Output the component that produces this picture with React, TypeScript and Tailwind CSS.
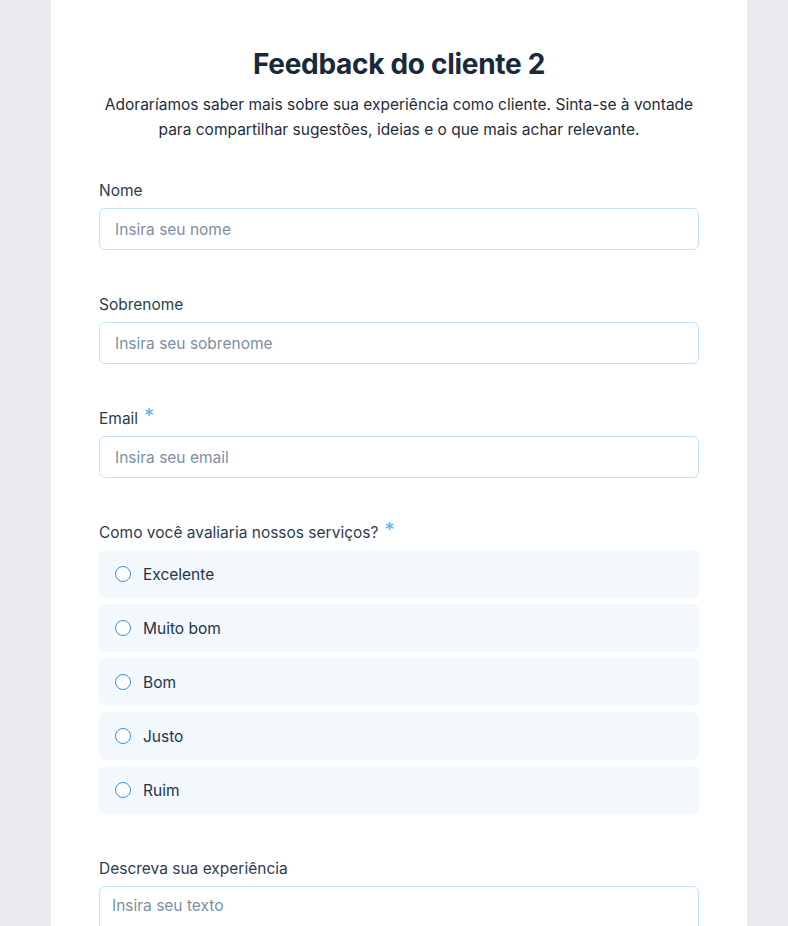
const fields = [
  { label: 'Nome', placeholder: 'Insira seu nome', required: false },
  { label: 'Sobrenome', placeholder: 'Insira seu sobrenome', required: false },
  { label: 'Email', placeholder: 'Insira seu email', required: true },
]

const options = ['Excelente', 'Muito bom', 'Bom', 'Justo', 'Ruim']

function Label({ text, required }: { text: string; required?: boolean }) {
  return (
    <div className="flex items-start h-[24px] text-[15.5px] leading-[26px] text-[#2b3d4f]">
      <span>{text}</span>
      {required && <span className="ml-[6px] text-[20px] leading-[20px] text-[#4eb7f5]">*</span>}
    </div>
  )
}

export default function App() {
  return (
    <div className="min-h-[926px] bg-[#e9eaf0] font-['Inter',sans-serif]">
      <div className="ml-[51px] w-[696px] min-h-[926px] bg-white px-[48px] pt-[46px]">
        <h1 className="text-center text-[28px] leading-[36px] font-bold text-[#182a3a] tracking-[-0.3px]">
          Feedback do cliente 2
        </h1>
        <p className="mt-[10px] text-center text-[15.5px] leading-[25px] text-[#1f2d3b]">
          Adoraríamos saber mais sobre sua experiência como cliente. Sinta-se à vontade
          <br />
          para compartilhar sugestões, ideias e o que mais achar relevante.
        </p>

        <div className="mt-[36px] flex flex-col gap-[42px]">
          {fields.map((f) => (
            <div key={f.label} className="flex flex-col gap-[6px]">
              <Label text={f.label} required={f.required} />
              <div className="h-[42px] rounded-[6px] border border-[#c3e3fa] flex items-center px-[15px] pt-[2px] text-[15.5px] text-[#7b90a3]">
                {f.placeholder}
              </div>
            </div>
          ))}

          <div className="flex flex-col gap-[6px]">
            <Label text="Como você avaliaria nossos serviços?" required />
            <div className="flex flex-col gap-[6px]">
              {options.map((o) => (
                <div key={o} className="h-[48px] rounded-[6px] bg-[#f3f8fd] flex items-center pl-[16px] gap-[12px] text-[15.5px] text-[#22364a]">
                  <span className="w-[16px] h-[16px] rounded-full border border-[#3b8fe0] bg-white" />
                  <span className="pt-[2px]">{o}</span>
                </div>
              ))}
            </div>
          </div>

          <div className="flex flex-col gap-[6px]">
            <Label text="Descreva sua experiência" />
            <div className="h-[80px] rounded-[6px] border border-[#c3e3fa] px-[12px] pt-[7px] text-[15.5px] text-[#7b90a3]">
              Insira seu texto
            </div>
          </div>
        </div>
      </div>
    </div>
  )
}
